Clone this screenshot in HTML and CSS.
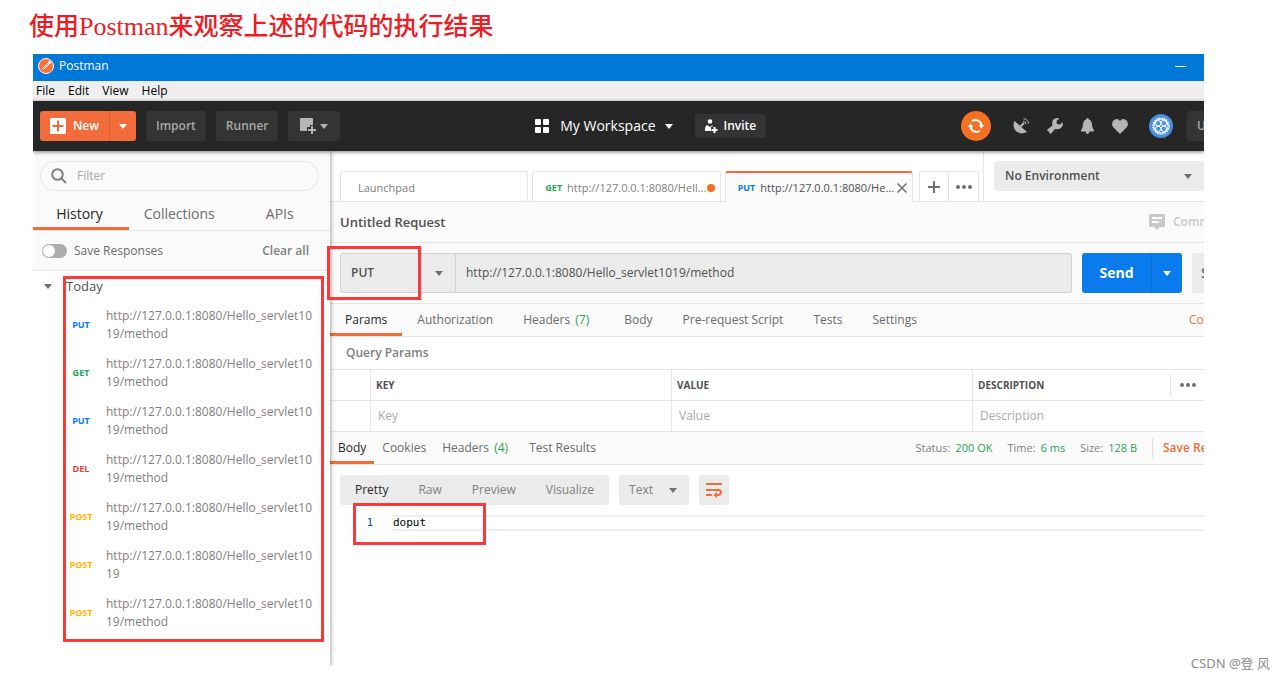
FILE: index.html
```html
<!DOCTYPE html>
<html lang="zh-CN">
<head>
<meta charset="utf-8">
<title>Postman</title>
<link rel="stylesheet" href="styles.css">
</head>
<body>
<h1 class="headline">使用<span class="headline-latin">Postman</span>来观察上述的代码的执行结果</h1>

<div class="app">
  <header class="titlebar">
    <svg class="logo" width="16" height="16" viewBox="0 0 16 16"><circle cx="8" cy="8" r="7.5" fill="#ff6c37" stroke="#fff"/><path d="M4 12l1.500-3L10 4.500l1.500 1.500L7 10.500z" fill="#fff"/><circle cx="11.500" cy="4.500" r="1.600" fill="#fff"/><path d="M5.500 10.500L10.500 5.500" stroke="#ff6c37" stroke-width=".8"/></svg>
    <span>Postman</span>
    <button class="minimize" aria-label="Minimize"></button>
  </header>
  <nav class="menubar">
    <a href="#">File</a><a href="#">Edit</a><a href="#">View</a><a href="#">Help</a>
  </nav>

  <div class="toolbar">
    <div class="tool-group">
      <div class="split">
        <button class="new-btn"><svg width="16" height="16" viewBox="0 0 16 16"><rect width="16" height="16" rx="1.500" fill="#fff"/><path d="M8 2.500v11M2.500 8h11" stroke="#f26b3a" stroke-width="2"/></svg>New</button>
        <button class="new-more" aria-label="More new options"><svg width="8" height="5" viewBox="0 0 8 5"><path d="M0 0h8L4 5z" fill="#fff"/></svg></button>
      </div>
      <button class="dark-btn">Import</button>
      <button class="dark-btn">Runner</button>
      <button class="dark-btn window-btn" aria-label="New window"><svg width="16" height="16" viewBox="0 0 16 16"><path d="M1 0h11a1 1 0 0 1 1 1v6h-3v2H7v4H1a1 1 0 0 1-1-1V1a1 1 0 0 1 1-1z" fill="#b5b5b5"/><path d="M12 8v8M8 12h8" stroke="#b5b5b5" stroke-width="2"/></svg><svg width="8" height="5" viewBox="0 0 8 5"><path d="M0 0h8L4 5z" fill="#b5b5b5"/></svg></button>
    </div>
    <div class="workspace">
      <svg width="14" height="14" viewBox="0 0 14 14" fill="#fff"><rect width="6" height="6" rx="1"/><rect x="8" width="6" height="6" rx="1"/><rect y="8" width="6" height="6" rx="1"/><rect x="8" y="8" width="6" height="6" rx="1"/></svg>
      <button class="workspace-name">My Workspace<svg width="8" height="5" viewBox="0 0 8 5"><path d="M0 0h8L4 5z" fill="#fff"/></svg></button>
      <button class="dark-btn invite"><svg width="13" height="14" viewBox="0 0 13 14" fill="#fff"><circle cx="5" cy="2.500" r="2.300"/><path d="M0 12V9.500q0-2.500 2-3.500l3 2 2.500-1.800V8H6v4z"/><path d="M9.500 8v6M6.500 11h6" stroke="#fff" stroke-width="2"/></svg>Invite</button>
    </div>
    <div class="status-icons">
      <button class="sync" aria-label="Sync"><svg width="16" height="16" viewBox="0 0 16 16" fill="none" stroke="#fff" stroke-width="2"><path d="M4 3.200A6 6 0 0 1 13.500 7.500M12 12.800A6 6 0 0 1 2.500 8.500"/><path d="M10.500 7h5.800L13.400 10.500zM-.3 9h5.800L2.600 5.500z" fill="#fff" stroke="none"/></svg></button>
      <button class="icon-btn" aria-label="Capture requests"><svg width="16" height="16" viewBox="0 0 16 16"><path d="M1.500 3Q-1 8 2.500 12.500Q7 17.500 14 14z" fill="#b5b5b5"/><path d="M7 9l4-4" stroke="#b5b5b5" stroke-width="2"/><path d="M10 3.200a3 3 0 0 1 3 3M10.500.7a5 5 0 0 1 5 5" fill="none" stroke="#b5b5b5"/></svg></button>
      <button class="icon-btn" aria-label="Settings"><svg width="16" height="16" viewBox="0 0 16 16"><path d="M12.500.5Q8.500-.8 6 2Q4.600 4.500 5.500 7.500L.5 11.500Q-.2 12.500.8 13L2 13.500L2.500 15Q3.300 16.200 4.500 15.200L8 11Q12.500 12 15 9Q16.400 6.500 15.500 4L13 6.500L10 6L9.500 3z" fill="#b5b5b5"/></svg></button>
      <button class="icon-btn" aria-label="Notifications"><svg width="13" height="16" viewBox="0 0 13 16"><path d="M6.500 0Q7.500 0 7.700 1.300Q10.500 2.200 11 6Q11.200 10.500 13 12v1.500H0V12Q1.800 10.500 2 6Q2.500 2.200 5.300 1.300Q5.500 0 6.500 0zM4.500 13.500h4Q8 16 6.500 16T4.500 13.500z" fill="#b5b5b5"/></svg></button>
      <button class="icon-btn" aria-label="Favourites"><svg width="16" height="15" viewBox="0 0 16 15"><path d="M8 15L1.500 8.500Q-.8 5.500.6 2.500Q2 0 4.500 0Q7 0 8 2Q9 0 11.500 0Q14 0 15.400 2.500Q16.800 5.500 14.500 8.500z" fill="#b5b5b5"/></svg></button>
      <button class="icon-btn" aria-label="Account"><svg width="24" height="24" viewBox="0 0 24 24" fill="none" stroke="#fff"><circle cx="12" cy="12" r="12" fill="#4a90e2" stroke="none"/><circle cx="12" cy="12" r="7.200" stroke-width="1.200"/><circle cx="12" cy="12" r="8.200" stroke-width="1.300" stroke-dasharray="1.300 1.280"/><circle cx="9.200" cy="9.200" r="2.700"/><circle cx="14.800" cy="9.200" r="2.700"/><circle cx="9.200" cy="14.800" r="2.700"/><circle cx="14.800" cy="14.800" r="2.700"/></svg></button>
      <button class="dark-btn upgrade">U</button>
    </div>
  </div>

  <div class="columns">
    <aside class="sidebar">
      <label class="search"><svg width="16" height="16" viewBox="0 0 16 16" fill="none" stroke="#808080" stroke-width="2"><circle cx="6.500" cy="6.500" r="5.300"/><path d="M10.500 10.500L15 15"/></svg><input type="text" placeholder="Filter" aria-label="Filter"></label>
      <nav class="side-tabs"><a class="active" href="#">History</a><a href="#">Collections</a><a href="#">APIs</a></nav>
      <div class="save-row">
        <label><input type="checkbox" class="toggle">Save Responses</label>
        <button class="clear">Clear all</button>
      </div>
      <div class="history">
        <button class="day"><svg width="8" height="5" viewBox="0 0 8 5"><path d="M0 0h8L4 5z" fill="#707070"/></svg>Today</button>
        <ul>
          <li><span class="verb put">PUT</span><a href="#">http://127.0.0.1:8080/Hello_servlet1019/method</a></li>
          <li><span class="verb get">GET</span><a href="#">http://127.0.0.1:8080/Hello_servlet1019/method</a></li>
          <li><span class="verb put">PUT</span><a href="#">http://127.0.0.1:8080/Hello_servlet1019/method</a></li>
          <li><span class="verb del">DEL</span><a href="#">http://127.0.0.1:8080/Hello_servlet1019/method</a></li>
          <li><span class="verb post">POST</span><a href="#">http://127.0.0.1:8080/Hello_servlet1019/method</a></li>
          <li><span class="verb post">POST</span><a href="#">http://127.0.0.1:8080/Hello_servlet1019</a></li>
          <li><span class="verb post">POST</span><a href="#">http://127.0.0.1:8080/Hello_servlet1019/method</a></li>
        </ul>
        <div class="mark mark-history"></div>
      </div>
    </aside>

    <main class="main">
      <div class="tab-strip">
        <div class="tabs">
          <a class="tab" href="#"><span class="tab-label">Launchpad</span></a>
          <a class="tab request" href="#"><span class="verb get">GET</span><span class="tab-label">http://127.0.0.1:8080/Hell...</span><span class="unsaved"></span></a>
          <a class="tab request current" href="#"><span class="verb put">PUT</span><span class="tab-label">http://127.0.0.1:8080/He...</span><svg width="10" height="10" viewBox="0 0 10 10"><path d="M.5.5l9 9M9.500.5l-9 9" stroke="#707070" stroke-width="1.500"/></svg></a>
          <div class="tab-actions">
            <button aria-label="New tab"><svg width="12" height="12" viewBox="0 0 12 12"><path d="M6 0v12M0 6h12" stroke="#707070" stroke-width="2"/></svg></button>
            <button aria-label="Tab options"><svg width="16" height="4" viewBox="0 0 16 4" fill="#707070"><circle cx="2" cy="2" r="2"/><circle cx="8" cy="2" r="2"/><circle cx="14" cy="2" r="2"/></svg></button>
          </div>
        </div>
        <div class="environment">
          <div class="select-box">
            <select aria-label="Environment"><option>No Environment</option></select>
            <svg width="8" height="5" viewBox="0 0 8 5"><path d="M0 0h8L4 5z" fill="#707070"/></svg>
          </div>
        </div>
      </div>

      <div class="request-head">
        <h2>Untitled Request</h2>
        <button class="comments"><svg width="16" height="16" viewBox="0 0 16 16"><path d="M1 0h14a1 1 0 0 1 1 1v11a1 1 0 0 1-1 1h-4l-3 3-3-3H1a1 1 0 0 1-1-1V1a1 1 0 0 1 1-1z" fill="#c8c8c8"/><path d="M3 4h10M3 8h7" stroke="#fff" stroke-width="2"/></svg><span>Comments</span></button>
      </div>

      <div class="url-row">
        <div class="url-box">
          <div class="method">
            <select aria-label="Method"><option>PUT</option></select>
            <svg width="8" height="5" viewBox="0 0 8 5"><path d="M0 0h8L4 5z" fill="#707070"/></svg>
          </div>
          <input type="text" aria-label="Request URL" value="http://127.0.0.1:8080/Hello_servlet1019/method">
        </div>
        <div class="split send">
          <button class="send-btn">Send</button>
          <button class="send-more" aria-label="Send options"><svg width="8" height="5" viewBox="0 0 8 5"><path d="M0 0h8L4 5z" fill="#fff"/></svg></button>
        </div>
        <button class="save-btn">Save</button>
        <div class="mark mark-method"></div>
      </div>

      <nav class="request-tabs">
        <a class="active" href="#">Params</a><a href="#">Authorization</a><a href="#">Headers <span class="count">(7)</span></a><a href="#">Body</a><a href="#">Pre-request Script</a><a href="#">Tests</a><a href="#">Settings</a>
        <a class="cookies" href="#">Cookies</a>
      </nav>

      <h3 class="params-title">Query Params</h3>
      <table class="params">
        <thead><tr><th class="pick"></th><th class="wide">KEY</th><th class="wide">VALUE</th><th><div class="last-head">DESCRIPTION<button aria-label="Column options"><svg width="16" height="4" viewBox="0 0 16 4" fill="#707070"><circle cx="2" cy="2" r="2"/><circle cx="8" cy="2" r="2"/><circle cx="14" cy="2" r="2"/></svg></button></div></th></tr></thead>
        <tbody><tr><td></td><td><input type="text" placeholder="Key" aria-label="Key"></td><td><input type="text" placeholder="Value" aria-label="Value"></td><td><input type="text" placeholder="Description" aria-label="Description"></td></tr></tbody>
      </table>

      <div class="response-head">
        <nav class="response-tabs"><a class="active" href="#">Body</a><a href="#">Cookies</a><a href="#">Headers <span class="count">(4)</span></a><a href="#">Test Results</a></nav>
        <div class="metrics">
          <span>Status:<b>200 OK</b></span><span>Time:<b>6 ms</b></span><span>Size:<b>128 B</b></span>
          <button class="save-response">Save Response</button>
        </div>
      </div>

      <div class="viewer-tools">
        <div class="modes"><button class="active">Pretty</button><button>Raw</button><button>Preview</button><button>Visualize</button></div>
        <div class="format">
          <select aria-label="Format"><option>Text</option></select>
          <svg width="8" height="5" viewBox="0 0 8 5"><path d="M0 0h8L4 5z" fill="#707070"/></svg>
        </div>
        <button class="wrap" aria-label="Wrap lines"><svg width="16" height="16" viewBox="0 0 16 16" fill="none" stroke="#f26b3a" stroke-width="2"><path d="M0 2h16M0 8h12.500a2.500 2.500 0 0 1 0 5H10M0 13h6"/><path d="M11 9.800v6.400L7.500 13z" fill="#f26b3a" stroke="none"/></svg></button>
      </div>
      <div class="code">
        <span class="line-no">1</span><code>doput</code>
        <div class="mark mark-body"></div>
      </div>
    </main>
  </div>
</div>
<div class="watermark">CSDN @登 风</div>
</body>
</html>
```
FILE: styles.css
```css
* { box-sizing: border-box; }

body {
  margin: 0;
  min-height: 100vh;
  position: relative;
  background: #fff;
  font: 12px/18px "Open Sans", "Noto Sans", "Noto Sans CJK SC", sans-serif;
  color: #6b6b6b;
}

button, input, select { font: inherit; color: inherit; margin: 0; padding: 0; border: 0; background: none; outline: 0; }
button { display: flex; align-items: center; justify-content: center; white-space: nowrap; }
select { appearance: none; }
a { color: inherit; text-decoration: none; white-space: nowrap; }
svg { display: block; flex: none; overflow: visible; }
h1, h2, h3, ul { margin: 0; padding: 0; }
input::placeholder { color: #a9a9a9; opacity: 1; }

.headline {
  padding: 6px 29px 12px;
  font: 500 25px/36px "Noto Sans CJK SC", sans-serif;
  color: #ed1c24;
}
.headline-latin { font-family: "Liberation Serif", serif; font-size: 26px; line-height: 24px; }

.app { margin: 0 81px 0 33px; overflow: hidden; }

.titlebar { display: flex; align-items: center; height: 27px; padding: 0 18px 3px 5px; gap: 5px; background: #0078d7; color: #fff; }
.minimize { width: 11px; height: 1px; margin-left: auto; background: #fff; }
.menubar { display: flex; gap: 13px; height: 20px; padding: 1px 3px; background: #efefef; color: #000; }

.toolbar {
  display: flex; align-items: center; justify-content: space-between;
  position: relative; z-index: 2;
  height: 50px; padding-left: 7px;
  background: #262626; box-shadow: 0 1px 4px rgba(0, 0, 0, .5);
}
.tool-group, .workspace, .status-icons, .split { display: flex; align-items: center; }
.tool-group { gap: 10px; }
.split { border-radius: 3px; overflow: hidden; }
.new-btn, .new-more { height: 30px; background: #f26b3a; color: #fff; font-weight: 600; }
.new-btn { width: 69px; gap: 7px; }
.new-more { width: 27px; border-left: 1px solid #dd5f31; }
.dark-btn { height: 30px; padding: 0 10px; border-radius: 3px; background: #343434; color: #a8a8a8; font-weight: 600; }
.window-btn { width: 52px; gap: 4px; }
.workspace-name { gap: 9px; margin: 0 22px 0 11px; font-size: 14px; color: #fff; }
.invite { height: 24px; gap: 6px; color: #fff; }
.sync { width: 30px; height: 30px; margin-right: 22px; border-radius: 50%; background: #f47023; }
.status-icons .icon-btn { margin-right: 18px; }
.status-icons .icon-btn:nth-last-child(2) { margin: 0 14px 0 3px; }
.upgrade { width: 17px; padding: 0 0 0 10px; justify-content: flex-start; overflow: hidden; border-radius: 3px 0 0 3px; }

.columns { display: flex; min-height: 515px; }
.sidebar { flex: none; width: 297px; position: relative; z-index: 1; background: #fafafa; box-shadow: 1px 0 4px rgba(0, 0, 0, .35); }
.search { display: flex; align-items: center; gap: 10px; height: 30px; margin: 10px 11px 10px 7px; padding: 0 10px; border: 1px solid #e4e4e4; border-radius: 15px; }
.search input { flex: 1; min-width: 0; }
.side-tabs { display: grid; grid-template-columns: 96px 1fr 1fr; height: 30px; border-bottom: 1px solid #e6e6e6; font-size: 14px; text-align: center; line-height: 26px; }
.side-tabs a { height: 29px; }
.side-tabs .active { padding-right: 3px; }
.active { color: #282828; box-shadow: inset 0 -3px #f26b3a; }
.save-row { display: flex; align-items: center; justify-content: space-between; height: 40px; padding: 0 21px 0 9px; border-bottom: 1px solid #e6e6e6; }
.save-row label { display: flex; align-items: center; gap: 7px; }
.toggle { appearance: none; width: 25px; height: 14px; padding: 1px; border-radius: 7px; background: #adadad; }
.toggle::before { content: ""; display: block; width: 12px; height: 12px; border-radius: 50%; background: #fff; }
.clear { font-weight: 600; color: #808080; }

.history { position: relative; min-height: 395px; background: #fff; }
.day { height: 30px; padding-left: 11px; gap: 14px; font-size: 13px; color: #505050; }
.history ul { list-style: none; }
.history li { display: grid; grid-template-columns: 36px 1fr; gap: 7px; align-items: center; padding: 6px 14px 6px 30px; min-height: 48px; color: #808080; }
.history li a { white-space: normal; word-break: break-all; }
.verb { font-size: 9px; font-weight: 700; text-align: center; }
.put { color: #097bed; }
.get { color: #26a35a; }
.del { color: #ed3a3a; }
.post { color: #ffb400; }

.mark { position: absolute; border: 3px solid #fd3838; pointer-events: none; z-index: 3; }
.mark-history { inset: 5px 6px 24px 30px; }
.mark-method { left: -3px; top: 3px; width: 94px; height: 54px; }
.mark-body { left: 23px; top: -12px; width: 133px; height: 42px; }

.main { flex: 1; min-width: 0; position: relative; z-index: 1; }
.sidebar + .main { z-index: auto; }
.tab-strip { display: flex; height: 51px; border-bottom: 1px solid #e4e4e4; }
.tabs { display: flex; flex: 1; align-items: flex-end; min-width: 0; padding: 0 4px 0 10px; gap: 4px; }
.tab { display: flex; flex: 1 1 180px; align-items: center; min-width: 0; height: 30px; padding: 2px 17px 0; border: 1px solid #e4e4e4; border-bottom: 0; border-radius: 3px 3px 0 0; font-size: 11px; color: #808080; }
.tab.request { padding: 2px 5px 0 12px; gap: 5px; }
.tab.current { height: 31px; margin-bottom: -1px; border-top: 2px solid #f26b3a; background: #fafafa; color: #505050; padding-top: 1px; }
.tab-label { flex: 1; min-width: 0; }
.unsaved { flex: none; width: 8px; height: 8px; border-radius: 50%; background: #f47023; }
.tab.request .unsaved, .tab.request > svg { margin-left: -5px; }
.tab-actions { display: flex; flex: none; width: 60px; height: 30px; margin-left: 2px; border: 1px solid #e4e4e4; border-bottom: 0; border-radius: 3px 3px 0 0; }
.tab-actions button { flex: 1; }
.tab-actions button + button { border-left: 1px solid #e4e4e4; }
.environment { flex: none; width: 221px; padding: 10px 0 0 10px; border-left: 1px solid #e4e4e4; }
.select-box, .method, .format { display: flex; align-items: center; position: relative; }
.select-box { height: 30px; border-radius: 3px; background: #ebebeb; color: #505050; font-weight: 600; }
.select-box select { width: 100%; height: 100%; padding-left: 11px; }
.select-box svg, .method svg, .format svg { position: absolute; right: 12px; pointer-events: none; }

.request-head { display: flex; align-items: center; justify-content: space-between; height: 41px; padding-left: 10px; border-bottom: 1px solid #e6e6e6; background: #fafafa; }
h2 { font-size: 13px; font-weight: 600; color: #505050; }
.comments { width: 55px; gap: 8px; justify-content: flex-start; overflow: hidden; font-weight: 600; color: #c8c8c8; }

.url-row { display: flex; align-items: center; gap: 10px; position: relative; height: 61px; padding-left: 10px; border-bottom: 1px solid #e6e6e6; background: #fafafa; }
.url-box { display: flex; flex: 1; height: 40px; border: 1px solid #d2d2d2; border-radius: 3px; background: #ebebeb; color: #505050; }
.method { width: 115px; border-right: 1px solid #d2d2d2; }
.method select { width: 100%; height: 100%; padding-left: 10px; font-weight: 600; }
.url-box input { flex: 1; min-width: 0; padding-left: 10px; }
.send-btn, .send-more { height: 40px; background: #097bed; color: #fff; }
.send-btn { width: 69px; font-size: 14px; font-weight: 700; }
.send-more { width: 31px; border-left: 1px solid #0a6cd0; }
.save-btn { width: 12px; height: 40px; padding-left: 9px; justify-content: flex-start; overflow: hidden; border-radius: 3px 0 0 3px; background: #ebebeb; font-size: 14px; font-weight: 600; }

.request-tabs { display: flex; height: 33px; border-bottom: 1px solid #e6e6e6; background: #fafafa; line-height: 32px; }
.request-tabs a { padding: 0 15px; }
.count { margin: 0 5px 0 2px; color: #26a35a; }
.request-tabs .cookies { width: 15px; margin-left: auto; padding: 0; overflow: hidden; color: #f26b3a; }

.params-title { padding-left: 16px; font-size: 12px; font-weight: 600; line-height: 32px; color: #808080; }
.params { width: 100%; border-spacing: 0; border-top: 1px solid #e6e6e6; table-layout: fixed; }
.params th, .params td { height: 31px; padding: 0 0 0 5px; border-bottom: 1px solid #e6e6e6; border-right: 1px solid #e6e6e6; text-align: left; }
.params th:last-child, .params td:last-child { border-right: 0; }
.params th { font-size: 10px; font-weight: 700; color: #505050; }
.params td { padding-left: 7px; }
.params input { width: 100%; }
.pick { width: 41px; }
.wide { width: 301px; }
.last-head { display: flex; align-items: center; justify-content: space-between; }
.last-head button { width: 34px; height: 22px; border-left: 1px solid #e6e6e6; }

.response-head { display: flex; justify-content: space-between; height: 33px; border-bottom: 1px solid #e6e6e6; background: #fafafa; line-height: 32px; }
.response-tabs { display: flex; }
.response-tabs a { padding: 0 8px; }
.metrics { display: flex; align-items: center; gap: 15px; font-size: 11px; color: #808080; white-space: nowrap; }
.metrics b { margin-left: 5px; font-weight: 400; color: #26a35a; }
.save-response { width: 52px; height: 20px; padding-left: 10px; justify-content: flex-start; overflow: hidden; border-left: 1px solid #e0e0e0; font-size: 12px; font-weight: 600; color: #f26b3a; }

.viewer-tools { display: flex; gap: 10px; padding: 10px; height: 50px; }
.modes { display: flex; border-radius: 3px; background: #ebebeb; }
.modes button { padding: 0 15px; color: #808080; }
.modes .active { color: #282828; box-shadow: none; }
.format { width: 70px; border-radius: 3px; background: #ebebeb; color: #808080; }
.format select { width: 100%; height: 100%; padding-left: 10px; }
.wrap { width: 30px; border-radius: 3px; background: #ebebeb; }

.code { display: flex; position: relative; font: 11px/12px "DejaVu Sans Mono", monospace; color: #000; }
.line-no { width: 63px; padding: 2px 20px 0 0; text-align: right; color: #0451a5; }
.code code { flex: 1; border: 2px solid #eee; border-width: 2px 0; font: inherit; }

.watermark { position: absolute; right: 15px; bottom: 6px; color: #8c8c8c; font: 13px/18px "Noto Sans", "Noto Sans CJK SC", sans-serif; }
```
